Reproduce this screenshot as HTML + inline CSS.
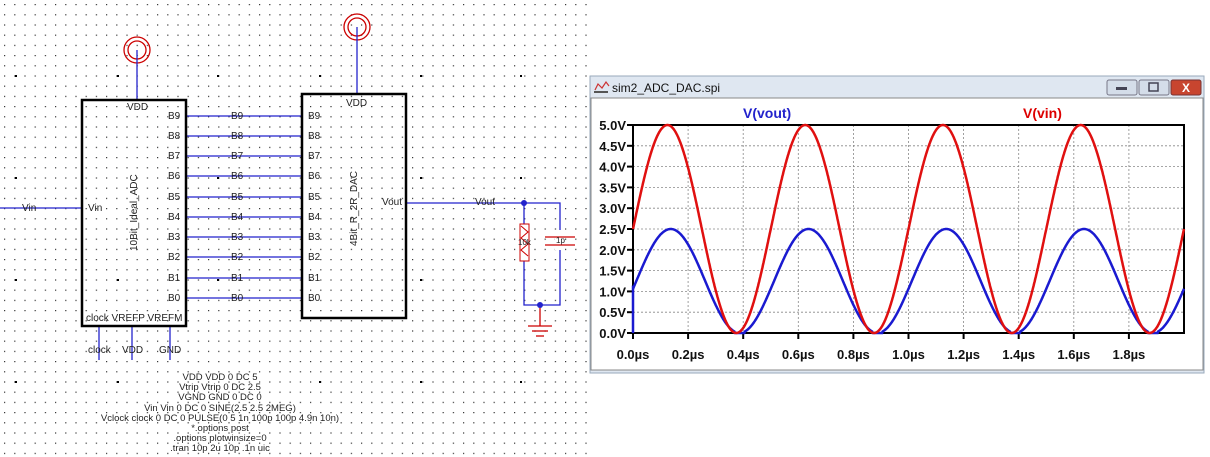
<!DOCTYPE html>
<html><head><meta charset="utf-8"><style>
html,body{margin:0;padding:0;background:#fff;width:1210px;height:457px;overflow:hidden}
svg{position:absolute;left:0;top:0}
text{font-family:"Liberation Sans",sans-serif}
</style></head><body>
<svg width="1210" height="457" xmlns="http://www.w3.org/2000/svg">
<defs>
<pattern id="g" width="10.2" height="10.2" patternUnits="userSpaceOnUse" x="4" y="4"><rect width="1.2" height="1.2" fill="#333"/></pattern>
</defs>
<rect x="0" y="0" width="588" height="457" fill="url(#g)"/>
<g fill="#000">
<rect x="15" y="75" width="2" height="2"/><rect x="117" y="75" width="2" height="2"/><rect x="217" y="75" width="2" height="2"/><rect x="319" y="75" width="2" height="2"/><rect x="420" y="75" width="2" height="2"/><rect x="520" y="75" width="2" height="2"/>
<rect x="15" y="177" width="2" height="2"/><rect x="217" y="177" width="2" height="2"/><rect x="420" y="177" width="2" height="2"/><rect x="520" y="177" width="2" height="2"/>
<rect x="15" y="279" width="2" height="2"/><rect x="117" y="279" width="2" height="2"/><rect x="217" y="279" width="2" height="2"/><rect x="420" y="279" width="2" height="2"/>
<rect x="15" y="381" width="2" height="2"/><rect x="117" y="381" width="2" height="2"/><rect x="319" y="381" width="2" height="2"/><rect x="420" y="381" width="2" height="2"/><rect x="520" y="381" width="2" height="2"/>
</g>
<g fill="none" stroke="#c00" stroke-width="1.3">
<circle cx="137" cy="50" r="13"/><circle cx="137" cy="50" r="9"/>
<circle cx="357" cy="27" r="13"/><circle cx="357" cy="27" r="9"/>
</g>
<g stroke="#22c" stroke-width="1.3" fill="none">
<line x1="137" y1="50" x2="137" y2="100"/>
<line x1="357" y1="27" x2="357" y2="94"/>
<line x1="0" y1="208" x2="82" y2="208"/>
<line x1="406" y1="203" x2="524" y2="203"/>
<polyline points="524,203 560,203 560,305 524,305 524,203"/>
<line x1="99" y1="326" x2="99" y2="360"/><line x1="132" y1="326" x2="132" y2="360"/><line x1="170" y1="326" x2="170" y2="360"/>
<line x1="186" y1="116" x2="302" y2="116"/><line x1="186" y1="136" x2="302" y2="136"/><line x1="186" y1="156" x2="302" y2="156"/><line x1="186" y1="176" x2="302" y2="176"/><line x1="186" y1="197" x2="302" y2="197"/><line x1="186" y1="217" x2="302" y2="217"/><line x1="186" y1="237" x2="302" y2="237"/><line x1="186" y1="257" x2="302" y2="257"/><line x1="186" y1="278" x2="302" y2="278"/><line x1="186" y1="298" x2="302" y2="298"/>
</g>
<rect x="520" y="224" width="9" height="37" fill="#fff" stroke="#c00"/>
<polyline points="521,226 528,232 521,238 528,244 521,250 528,256" fill="none" stroke="#c00"/>
<rect x="555" y="230" width="10" height="20" fill="#fff"/>
<g stroke="#c00" stroke-width="1.3"><line x1="545" y1="237" x2="575" y2="237"/><line x1="545" y1="245" x2="575" y2="245"/>
<line x1="540" y1="305" x2="540" y2="326"/><line x1="528" y1="326" x2="552" y2="326"/><line x1="532" y1="331" x2="548" y2="331"/><line x1="536" y1="336" x2="544" y2="336"/></g>
<circle cx="524" cy="203" r="3" fill="#22c"/><circle cx="540" cy="305" r="3" fill="#22c"/>
<rect x="82" y="100" width="104" height="226" fill="none" stroke="#000" stroke-width="2.5"/>
<rect x="302" y="94" width="104" height="224" fill="none" stroke="#000" stroke-width="2.5"/>
<g font-size="10" fill="#222">
<text x="127" y="110">VDD</text><text x="346" y="106">VDD</text>
<text x="22" y="211">Vin</text><text x="88" y="211">Vin</text>
<text x="382" y="205">Vout</text><text x="475" y="205">Vout</text>
<text x="556" y="243" font-size="8">1p</text><text x="518" y="245" font-size="8">10k</text>
<text x="86" y="321">clock VREFP VREFM</text>
<text x="88" y="353">clock</text><text x="122" y="353">VDD</text><text x="159" y="353">GND</text>
<text transform="translate(137,251) rotate(-90)">10Bit_Ideal_ADC</text>
<text transform="translate(357,246) rotate(-90)">4Bit_R_2R_DAC</text>
</g>
<g font-size="10" fill="#222">
<text x="168" y="119">B9</text><text x="231" y="119">B9</text><text x="308" y="119">B9</text>
<text x="168" y="139">B8</text><text x="231" y="139">B8</text><text x="308" y="139">B8</text>
<text x="168" y="159">B7</text><text x="231" y="159">B7</text><text x="308" y="159">B7</text>
<text x="168" y="179">B6</text><text x="231" y="179">B6</text><text x="308" y="179">B6</text>
<text x="168" y="200">B5</text><text x="231" y="200">B5</text><text x="308" y="200">B5</text>
<text x="168" y="220">B4</text><text x="231" y="220">B4</text><text x="308" y="220">B4</text>
<text x="168" y="240">B3</text><text x="231" y="240">B3</text><text x="308" y="240">B3</text>
<text x="168" y="260">B2</text><text x="231" y="260">B2</text><text x="308" y="260">B2</text>
<text x="168" y="281">B1</text><text x="231" y="281">B1</text><text x="308" y="281">B1</text>
<text x="168" y="301">B0</text><text x="231" y="301">B0</text><text x="308" y="301">B0</text>
</g>
<g font-size="9.5" fill="#222" text-anchor="middle">
<text x="220" y="380">VDD VDD 0 DC 5</text>
<text x="220" y="390">Vtrip Vtrip 0 DC 2.5</text>
<text x="220" y="400">VGND GND 0 DC 0</text>
<text x="220" y="411">Vin Vin 0 DC 0 SINE(2.5 2.5 2MEG)</text>
<text x="220" y="421">Vclock clock 0 DC 0 PULSE(0 5 1n 100p 100p 4.9n 10n)</text>
<text x="220" y="431">*.options post</text>
<text x="220" y="441">.options plotwinsize=0</text>
<text x="220" y="451">.tran 10p 2u 10p .1n uic</text>
</g>
<rect x="588" y="70" width="622" height="310" fill="#fff"/>
<rect x="590" y="76" width="614" height="297" fill="#dfe7f1" stroke="#9aaabb"/>
<rect x="591" y="98" width="612" height="272" fill="#fff" stroke="#888"/>
<text x="612" y="92" font-size="12" fill="#111">sim2_ADC_DAC.spi</text>
<polyline points="595,90 598,84 602,88 606,82 609,86" fill="none" stroke="#c33" stroke-width="1.2"/>
<rect x="594" y="91" width="14" height="2" fill="#555"/>
<rect x="1107" y="80" width="30" height="15" rx="2" fill="#d4dde9" stroke="#778"/>
<rect x="1139" y="80" width="30" height="15" rx="2" fill="#d4dde9" stroke="#778"/>
<rect x="1171" y="80" width="30" height="15" rx="2" fill="#c8452f" stroke="#733"/>
<rect x="1116" y="87" width="11" height="3" fill="#445"/>
<rect x="1149" y="83" width="9" height="8" fill="none" stroke="#445" stroke-width="1.5"/>
<text x="1186" y="92" font-size="12" font-weight="bold" fill="#fff" text-anchor="middle">X</text>
<g id="grid" stroke="#888" stroke-dasharray="2,2" stroke-width="0.8"></g>
<rect x="633" y="125" width="551" height="208" fill="none" stroke="#000" stroke-width="2"/>
<g id="ticks" stroke="#000" stroke-width="2"></g>
<g id="lbl" font-size="13" font-weight="bold" fill="#111"></g>
<text x="743" y="118" font-size="14" font-weight="bold" fill="#22c">V(vout)</text>
<text x="1023" y="118" font-size="14" font-weight="bold" fill="#d00">V(vin)</text>
<path id="blue" fill="none" stroke="#1a1ad0" stroke-width="2.5"/>
<path id="red" fill="none" stroke="#e01010" stroke-width="2.5"/>
</svg>
<script>
var ns="http://www.w3.org/2000/svg";
function el(p,t,a,txt){var e=document.createElementNS(ns,t);for(var k in a)e.setAttribute(k,a[k]);if(txt)e.textContent=txt;document.getElementById(p).appendChild(e);}
var X0=633,W=551,Y0=333,H=208;
function X(t){return X0+t/2*W} function Y(v){return Y0-v/5*H}
for(var i=1;i<10;i++){el('grid','line',{x1:X(i*0.2),y1:125,x2:X(i*0.2),y2:333});}
for(var j=1;j<10;j++){el('grid','line',{x1:633,y1:Y(j*0.5),x2:1184,y2:Y(j*0.5)});}
for(var i=0;i<10;i++){el('ticks','line',{x1:X(i*0.2),y1:333,x2:X(i*0.2),y2:339});el('lbl','text',{x:X(i*0.2),y:359,'text-anchor':'middle'},(i*0.2).toFixed(1)+'\u00b5s');}
for(var j=0;j<=10;j++){el('ticks','line',{x1:627,y1:Y(j*0.5),x2:633,y2:Y(j*0.5)});el('lbl','text',{x:626,y:Y(j*0.5)+5,'text-anchor':'end'},(j*0.5).toFixed(1)+'V');}
var r='',b='';
for(var k=0;k<=1000;k++){var t=k/500;var v=2.5+2.5*Math.sin(2*Math.PI*2*t);r+=(k?'L':'M')+X(t).toFixed(1)+','+Y(v).toFixed(1);
var tb=t-0.012;var vb=(2.5+2.5*Math.sin(2*Math.PI*2*tb))/2;if(vb<0.03)vb=0;
if(k==0)b='M'+X(0)+','+Y(0)+'L'+X(0)+','+Y(1.1);else b+='L'+X(t).toFixed(1)+','+Y(vb).toFixed(1);}
document.getElementById('red').setAttribute('d',r);document.getElementById('blue').setAttribute('d',b);
</script>
</body></html>
